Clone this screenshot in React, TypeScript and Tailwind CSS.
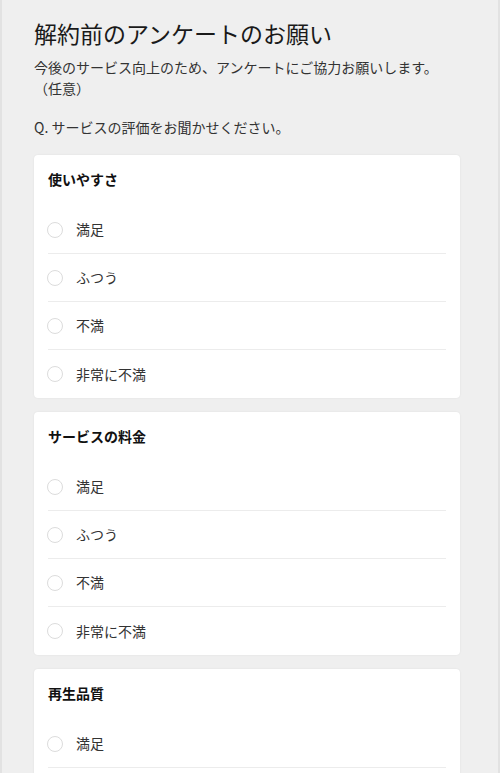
const questions = [
  { title: "使いやすさ" },
  { title: "サービスの料金" },
  { title: "再生品質" },
];

const options = ["満足", "ふつう", "不満", "非常に不満"];

function QuestionCard({ title }: { title: string }) {
  return (
    <div className="rounded-[4px] bg-white px-[14px] pt-[14px] shadow-[0_0_2px_rgba(0,0,0,0.08)]">
      <h2 className="text-[14px] font-bold leading-[21px] text-[#111]">{title}</h2>
      <ul className="mt-[16px]">
        {options.map((opt, i) => (
          <li
            key={opt}
            className={
              "flex h-[48px] items-center " +
              (i < options.length - 1 ? "border-b border-[#ececec]" : "")
            }
          >
            <span className="ml-[-1px] h-[16px] w-[16px] shrink-0 rounded-full border border-[#dcdcdc] bg-white" />
            <span className="ml-[13px] text-[14px] text-[#333]">{opt}</span>
          </li>
        ))}
      </ul>
    </div>
  );
}

export default function App() {
  return (
    <div
      className="h-[773px] overflow-hidden border-x-2 border-[#e2e2e2] bg-[#efefef] pl-[32px] pr-[38px] pt-[17px]"
      style={{ fontFamily: '"Noto Sans CJK JP", "Noto Sans", sans-serif' }}
    >
      <h1 className="text-[23px] font-normal leading-[32px] text-[#1a1a1a]">解約前のアンケートのお願い</h1>
      <p className="mt-[8px] text-[14px] leading-[21px] text-[#333]">
        今後のサービス向上のため、アンケートにご協力お願いします。
        <br />
        （任意）
      </p>
      <p className="mt-[18px] text-[14px] leading-[21px] text-[#333]">Q. サービスの評価をお聞かせください。</p>
      <div className="mt-[17px] flex flex-col gap-[14px]">
        {questions.map((q) => (
          <QuestionCard key={q.title} title={q.title} />
        ))}
      </div>
    </div>
  );
}
